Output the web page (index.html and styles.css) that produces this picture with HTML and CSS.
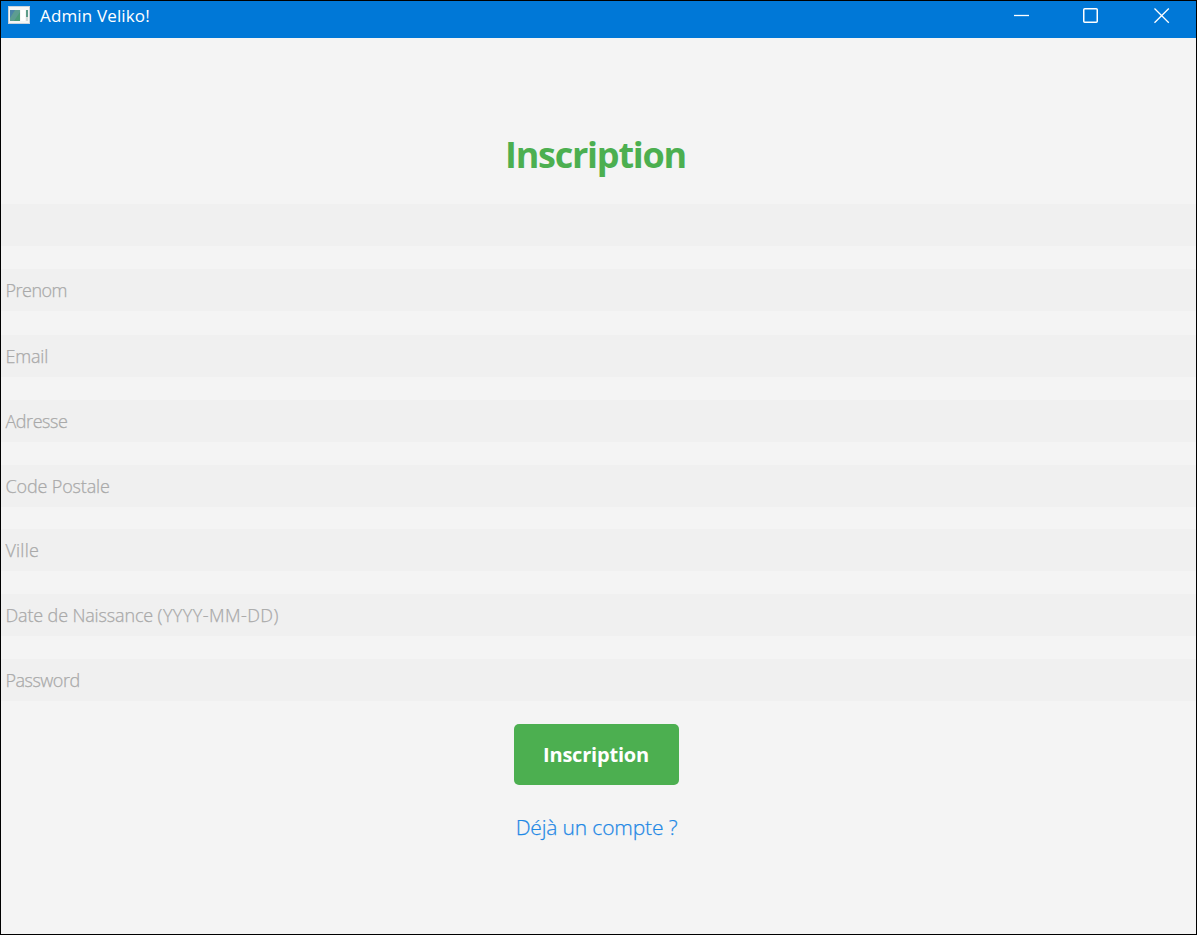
FILE: index.html
```html
<!DOCTYPE html>
<html lang="fr">
<head>
<meta charset="utf-8">
<title>Admin Veliko!</title>
<link rel="stylesheet" href="styles.css">
</head>
<body>
<div class="window">
  <header class="titlebar">
    <svg class="app-icon" width="22" height="18" viewBox="0 0 22 18">
      <rect width="22" height="18" fill="#c9d3dc"/>
      <rect x="1" y="1" width="20" height="16" fill="#f5f6f5"/>
      <rect x="2" y="4" width="10" height="11" fill="#5d9c91"/>
      <path d="M2 4h5L2 12z" fill="#4b84a8"/>
      <path d="M12 6v9H6z" fill="#4c9b78"/>
      <rect x="13" y="4" width="4" height="11" fill="#fff"/>
      <rect x="18" y="4" width="2" height="7" fill="#5f9c8a"/>
      <rect x="18" y="11" width="2" height="4" fill="#d4dcda"/>
    </svg>
    <span class="app-title">Admin Veliko!</span>
    <div class="controls">
      <svg width="16" height="16" viewBox="0 0 16 16"><path d="M0 7.5h15"/></svg>
      <svg width="16" height="16" viewBox="0 0 16 16"><rect class="maximize" x=".75" y=".75" width="13.5" height="13.5" rx="1"/></svg>
      <svg width="16" height="16" viewBox="0 0 16 16"><path d="M.5.5l14.3 14.3M14.8.5L.5 14.8"/></svg>
    </div>
  </header>
  <main class="page">
    <h1 class="heading">Inscription</h1>
    <form class="form">
      <div class="field"></div>
      <div class="field field-firstname">Prenom</div>
      <div class="field field-email">Email</div>
      <div class="field field-address">Adresse</div>
      <div class="field field-postcode">Code Postale</div>
      <div class="field field-city">Ville</div>
      <div class="field field-date">Date de Naissance <span class="format">(YYYY-MM-DD)</span></div>
      <div class="field field-password">Password</div>
    </form>
    <button class="submit" type="button">Inscription</button>
    <a class="login">Déjà un compte ?</a>
  </main>
</div>
</body>
</html>
```
FILE: styles.css
```css
* { box-sizing: border-box; }
body {
  margin: 0;
  font-family: "Open Sans", "Noto Sans", sans-serif;
  background: #f4f4f4;
}
.window {
  width: 1197px;
  height: 935px;
  border: 1px solid #000;
  background: #f4f4f4;
  overflow: hidden;
}
.titlebar {
  height: 37px;
  display: flex;
  align-items: flex-start;
  padding: 5px 26px 0 7px;
  background: #0078d7;
}
.app-icon { flex: none; }
.app-title {
  margin: -1px 0 0 10px;
  font-size: 17px;
  line-height: 22px;
  letter-spacing: 0.15px;
  color: #fff;
  white-space: nowrap;
}
.controls {
  display: flex;
  gap: 54px;
  margin: 2px 0 0 auto;
}
.controls svg { fill: none; stroke: #fff; stroke-width: 1.3; overflow: visible; }
.controls .maximize { x: -0.25px; stroke-width: 1.5; }
.page {
  display: flex;
  flex-direction: column;
  align-items: center;
}
.heading {
  margin: 91px 0 0;
  padding-right: 6px;
  height: 75px;
  line-height: 51px;
  font-size: 36px;
  font-weight: 700;
  letter-spacing: -1.25px;
  color: #4caf50;
}
.form {
  width: 100%;
  display: flex;
  flex-direction: column;
  gap: 23px;
}
.field {
  height: 42px;
  padding-left: 4.5px;
  line-height: 43px;
  font-size: 18px;
  font-weight: 300;
  color: #a9a9a9;
  -webkit-text-stroke: 0.25px #a9a9a9;
  background: #f0f0f0;
  white-space: nowrap;
}
.field-firstname { letter-spacing: -0.5px; }
.field-email { margin-top: 1px; letter-spacing: -0.2px; }
.field-address { letter-spacing: -0.45px; }
.field-postcode { letter-spacing: -0.15px; }
.field-city { margin-top: -1px; letter-spacing: 0.2px; }
.field-date { letter-spacing: -0.15px; }
.format { letter-spacing: 0.45px; }
.field-password { letter-spacing: -0.5px; }
.submit {
  width: 165px;
  height: 61px;
  margin: 23px 4px 0 0;
  padding: 0 1px 0 0;
  border: 0;
  border-radius: 5px;
  background: #4caf50;
  color: #fff;
  font: 700 20px/61px "Open Sans", "Noto Sans", sans-serif;
  letter-spacing: -0.2px;
}
.login {
  margin: 27px 0 0;
  padding-right: 4px;
  line-height: 30px;
  font-size: 21px;
  font-weight: 300;
  letter-spacing: -0.15px;
  color: #1e88e5;
  -webkit-text-stroke: 0.25px #1e88e5;
  white-space: nowrap;
}
```
